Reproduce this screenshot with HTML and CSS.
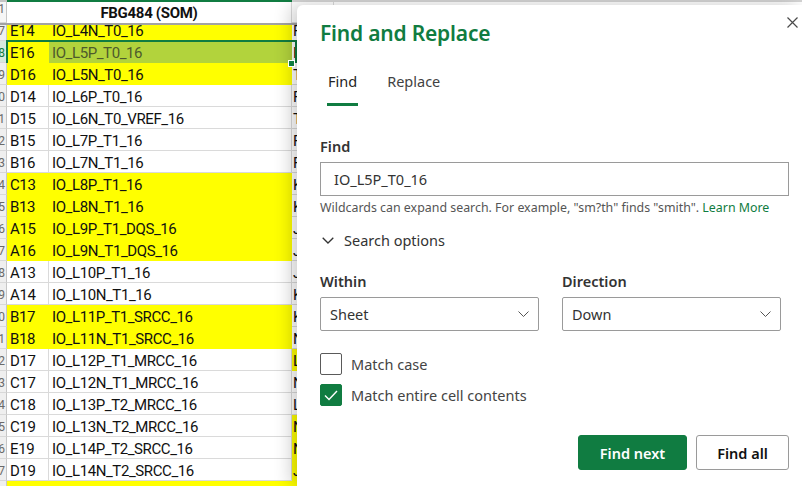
FILE: index.html
```html
<!DOCTYPE html>
<html lang="en">
<head>
<meta charset="utf-8">
<title>Find and Replace</title>
<link rel="stylesheet" href="styles.css">
</head>
<body>
<div class="sheet">
  <div class="colhdr"><div class="ch-rn"></div><div class="ch-ab"></div><div class="ch-rest"></div></div>
  <div class="hrow">
    <div class="rn"><span>1</span></div>
    <div class="ab">FBG484 (SOM)</div>
    <div class="c hc"></div>
  </div>
  <div class="row clip y"><div class="rn"><span>7</span></div><div class="a">E14</div><div class="b">IO_L4N_T0_16</div><div class="c">F</div></div>
  <div class="row y sel"><div class="rn rn-sel"><span>8</span></div><div class="a">E16</div><div class="b bsel">IO_L5P_T0_16</div><div class="c">F</div><span class="handle"></span></div>
  <div class="row y"><div class="rn"><span>9</span></div><div class="a">D16</div><div class="b">IO_L5N_T0_16</div><div class="c">T</div></div>
  <div class="row"><div class="rn"><span>10</span></div><div class="a">D14</div><div class="b">IO_L6P_T0_16</div><div class="c">F</div></div>
  <div class="row"><div class="rn"><span>11</span></div><div class="a">D15</div><div class="b">IO_L6N_T0_VREF_16</div><div class="c">T</div></div>
  <div class="row"><div class="rn"><span>12</span></div><div class="a">B15</div><div class="b">IO_L7P_T1_16</div><div class="c">F</div></div>
  <div class="row"><div class="rn"><span>13</span></div><div class="a">B16</div><div class="b">IO_L7N_T1_16</div><div class="c">F</div></div>
  <div class="row y"><div class="rn"><span>14</span></div><div class="a">C13</div><div class="b">IO_L8P_T1_16</div><div class="c">K</div></div>
  <div class="row y"><div class="rn"><span>15</span></div><div class="a">B13</div><div class="b">IO_L8N_T1_16</div><div class="c">K</div></div>
  <div class="row y"><div class="rn"><span>16</span></div><div class="a">A15</div><div class="b">IO_L9P_T1_DQS_16</div><div class="c">J</div></div>
  <div class="row y"><div class="rn"><span>17</span></div><div class="a">A16</div><div class="b">IO_L9N_T1_DQS_16</div><div class="c">J</div></div>
  <div class="row"><div class="rn"><span>18</span></div><div class="a">A13</div><div class="b">IO_L10P_T1_16</div><div class="c">J</div></div>
  <div class="row"><div class="rn"><span>19</span></div><div class="a">A14</div><div class="b">IO_L10N_T1_16</div><div class="c">K</div></div>
  <div class="row y"><div class="rn"><span>20</span></div><div class="a">B17</div><div class="b">IO_L11P_T1_SRCC_16</div><div class="c">K</div></div>
  <div class="row y"><div class="rn"><span>21</span></div><div class="a">B18</div><div class="b">IO_L11N_T1_SRCC_16</div><div class="c">N</div></div>
  <div class="row"><div class="rn"><span>22</span></div><div class="a">D17</div><div class="b">IO_L12P_T1_MRCC_16</div><div class="c cy">L</div></div>
  <div class="row"><div class="rn"><span>23</span></div><div class="a">C17</div><div class="b">IO_L12N_T1_MRCC_16</div><div class="c">N</div></div>
  <div class="row"><div class="rn"><span>24</span></div><div class="a">C18</div><div class="b">IO_L13P_T2_MRCC_16</div><div class="c">L</div></div>
  <div class="row"><div class="rn"><span>25</span></div><div class="a">C19</div><div class="b">IO_L13N_T2_MRCC_16</div><div class="c cy">N</div></div>
  <div class="row"><div class="rn"><span>26</span></div><div class="a">E19</div><div class="b">IO_L14P_T2_SRCC_16</div><div class="c cy">N</div></div>
  <div class="row"><div class="rn"><span>27</span></div><div class="a">D19</div><div class="b">IO_L14N_T2_SRCC_16</div><div class="c cy">J</div></div>
  <div class="row y"><div class="rn"><span>28</span></div><div class="a"></div><div class="b"></div><div class="c cy"></div></div>
</div>

<div class="panel">
  <button class="close" aria-label="Close">
    <svg width="11" height="11" viewBox="0 0 11 11"><path d="M0.5 0.5L10.5 10.5M10.5 0.5L0.5 10.5" stroke="#4a4a4a" stroke-width="1.2" fill="none"/></svg>
  </button>
  <h1 class="title">Find and Replace</h1>
  <div class="tabs">
    <div class="tab active">Find</div>
    <div class="tab">Replace</div>
  </div>
  <div class="label lbl-find">Find</div>
  <div class="input">IO_L5P_T0_16</div>
  <div class="hint">Wildcards can expand search. For example, "sm?th" finds "smith". <span class="link">Learn More</span></div>
  <div class="options">
    <svg class="chev" width="12" height="7" viewBox="0 0 12 7"><path d="M0.7 0.7L6 6L11.3 0.7" stroke="#333" stroke-width="1.3" fill="none"/></svg>
    <span>Search options</span>
  </div>
  <div class="selects">
    <div class="field">
      <div class="label">Within</div>
      <div class="select"><span>Sheet</span><svg width="11" height="6" viewBox="0 0 11 6"><path d="M0.5 0.5L5.5 5.5L10.5 0.5" stroke="#555" stroke-width="1" fill="none"/></svg></div>
    </div>
    <div class="field">
      <div class="label">Direction</div>
      <div class="select"><span>Down</span><svg width="11" height="6" viewBox="0 0 11 6"><path d="M0.5 0.5L5.5 5.5L10.5 0.5" stroke="#555" stroke-width="1" fill="none"/></svg></div>
    </div>
  </div>
  <div class="check first"><span class="box"></span><span>Match case</span></div>
  <div class="check"><span class="box on"><svg width="14" height="11" viewBox="0 0 14 11"><path d="M1 5.5L5 9.5L13 1" stroke="#fff" stroke-width="1.4" fill="none"/></svg></span><span>Match entire cell contents</span></div>
  <div class="buttons">
    <button class="btn primary">Find next</button>
    <button class="btn">Find all</button>
  </div>
</div>
</body>
</html>
```

FILE: styles.css
```css
* { box-sizing: border-box; margin: 0; padding: 0; }
html, body { width: 802px; height: 486px; overflow: hidden; }
body { position: relative; background: #fff; font-family: Roboto, "Liberation Sans", sans-serif; color: #111; }

/* spreadsheet */
.sheet { display: flex; flex-direction: column; }
.colhdr { display: flex; height: 2px; }
.ch-rn { width: 7px; background: #c4c4c4; }
.ch-ab { width: 285px; background: #107c41; }
.ch-rest { flex: 1; background: #d4d4d4; }

.hrow { display: flex; height: 23px; border-bottom: 2px solid #a3a3a3; }
.hrow .ab { width: 285px; flex: none; text-align: center; font-weight: 700; font-size: 15px; line-height: 22px; letter-spacing: -0.3px; border-right: 1px solid #dadada; color: #111; }
.hrow .rn { background: #f6f6f6; }
.hc { background-image: linear-gradient(#dadada, #dadada); background-size: 1px 100%; background-repeat: no-repeat; background-position: 41px 0; }

.row { display: flex; height: 22px; font-size: 15px; line-height: 20px; letter-spacing: -0.4px; position: relative; }
.row > div { padding-top: 2px; }
.row.clip { height: 16px; line-height: 13px; }
.row.clip > div { padding-top: 0; }

.rn { width: 7px; flex: none; background: #efefef; border-right: 1px solid #c6c6c6; border-bottom: 1px solid #d8d8d8; color: #6a6a6a; overflow: hidden; display: flex; justify-content: flex-end; font-size: 12px; letter-spacing: 0; padding-right: 1px; }
.rn span { flex: none; }
.rn-sel { background: #d7e9de; color: #107c41; }

.a { width: 42px; flex: none; padding-left: 3px; border-right: 1px solid #dadada; border-bottom: 1px solid #dadada; white-space: nowrap; overflow: hidden; }
.b { width: 243px; flex: none; padding-left: 3px; border-right: 1px solid #dadada; border-bottom: 1px solid #dadada; white-space: nowrap; overflow: hidden; }
.c { flex: 1; padding-left: 1px; border-bottom: 1px solid #dadada; white-space: nowrap; overflow: hidden; }

.row.y .a, .row.y .b { background: #ffff00; border-color: #ffff00; }
.c.cy, .row.y .c { background: #ffff00; border-color: #ffff00; }
.row.y .c:not(.cy) { background: #fff; border-color: #dadada; }

.row.sel::after { content: ""; position: absolute; left: 6px; top: -1px; width: 287px; height: 24px; border: 2px solid #107c41; pointer-events: none; }
.row.sel .b.bsel { background: #b2d33c; border-color: #b2d33c; color: #4d5a2c; }
.handle { position: absolute; left: 288px; top: 19px; width: 7px; height: 7px; background: #107c41; border: 1px solid #fff; z-index: 2; }

/* panel */
.panel { position: absolute; left: 297px; top: 5px; right: 0; bottom: 0; background: #fff; border-top-left-radius: 6px; box-shadow: -6px 0 18px rgba(0, 0, 0, 0.2); padding: 13px 13px 0 23px; font-family: "Noto Sans", "Open Sans", sans-serif; color: #333; }
.close { position: absolute; right: 4px; top: 12px; width: 11px; height: 11px; border: 0; background: none; display: block; }
.close svg { display: block; }
.title { font-size: 21px; font-weight: 600; color: #107c41; line-height: 30px; height: 30px; letter-spacing: -0.2px; }

.tabs { display: flex; gap: 28px; margin: 23px 0 0 7px; }
.tab { font-size: 14.5px; line-height: 20px; padding: 0 1px 12px; border-bottom: 3px solid transparent; color: #424242; }
.tab.active { border-bottom-color: #107c41; color: #242424; }

.label { font-size: 14.5px; font-weight: 600; line-height: 20px; color: #333; }
.lbl-find { margin-top: 30px; }
.input { margin-top: 6px; height: 34px; width: 469px; border: 1px solid #9a9a9a; padding-left: 13px; font-size: 14.5px; line-height: 32px; color: #333; }
.hint { margin-top: 3px; font-size: 12.4px; line-height: 18px; color: #555; white-space: nowrap; }
.link { color: #107c41; }

.options { margin-top: 13px; display: flex; align-items: center; height: 20px; font-size: 14.5px; line-height: 20px; color: #333; }
.chev { margin: 0 10px 0 2px; display: block; }

.selects { display: grid; grid-template-columns: 219px 219px; column-gap: 23px; margin-top: 21px; }
.select { margin-top: 6px; height: 34px; border: 1px solid #9a9a9a; border-radius: 2px; display: flex; align-items: center; justify-content: space-between; padding: 0 9px 0 9px; font-size: 14.5px; color: #333; }
.select svg { display: block; }

.check { display: flex; align-items: center; gap: 9px; height: 22px; font-size: 14.5px; color: #444; margin-top: 9px; }
.check.first { margin-top: 22px; }
.box { width: 22px; height: 22px; border: 1px solid #5a5a5a; border-radius: 2px; display: flex; align-items: center; justify-content: center; flex: none; }
.box.on { background: #107c41; border-color: #107c41; }
.box svg { display: block; }

.buttons { display: flex; justify-content: flex-end; gap: 9px; margin-top: 29px; }
.btn { height: 35px; font-family: "Noto Sans", "Open Sans", sans-serif; font-size: 14.5px; font-weight: 600; border-radius: 3px; border: 1px solid #9a9a9a; background: #fff; color: #111; width: 93px; }
.btn.primary { width: 109px; background: #107c41; border-color: #107c41; color: #fff; }
```
